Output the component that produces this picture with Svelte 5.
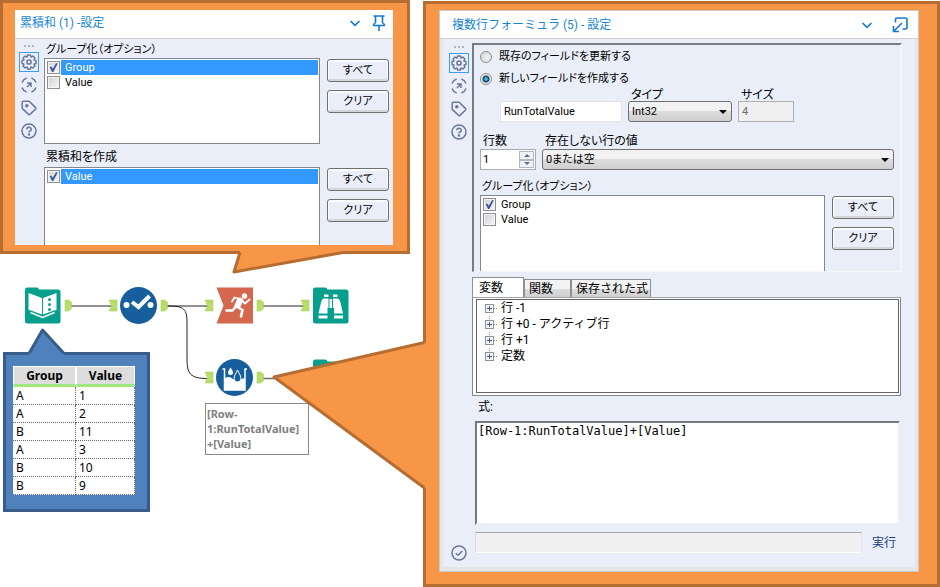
<script>
  let sumGroups = $state([
    { name: 'Group', checked: true, selected: true },
    { name: 'Value', checked: false, selected: false }
  ]);
  let sumFields = $state([{ name: 'Value', checked: true, selected: true }]);
  let rowGroups = $state([
    { name: 'Group', checked: true, selected: false },
    { name: 'Value', checked: false, selected: false }
  ]);
  let mode = $state('new');
  let fieldName = $state('RunTotalValue');
  let rowCount = $state(1);
  let formula = $state('[Row-1:RunTotalValue]+[Value]');
  let activeTab = $state(0);

  const tabs = ['変数', '関数', '保存された式'];
  const tree = ['行 -1', '行 +0 - アクティブ行', '行 +1', '定数'];
  const rows = [['A', 1], ['A', 2], ['B', 11], ['A', 3], ['B', 10], ['B', 9]];

  const setAll = (list, value) => list.forEach((item) => (item.checked = value));

  // Outline of an eight-toothed gear centred on 10,10
  const gear = Array.from({ length: 8 }, (_, i) => {
    const a = (i * Math.PI) / 4;
    return [[5.6, -0.34], [7.1, -0.2], [7.1, 0.2], [5.6, 0.34]]
      .map(([r, d]) => `${(10 + r * Math.cos(a + d)).toFixed(2)},${(10 + r * Math.sin(a + d)).toFixed(2)}`)
      .join(' ');
  }).join(' ');
</script>

{#snippet rail(withStatus)}
  <nav class="rail" aria-label="ツール">
    <span class="grip"><i></i><i></i><i></i></span>
    <button class="tool current" aria-label="設定">
      <svg viewBox="0 0 20 20"><polygon points={gear} /><circle cx="10" cy="10" r="2.1" /></svg>
    </button>
    <button class="tool" aria-label="ナビゲーション">
      <svg viewBox="0 0 20 20">
        <path d="M7.6 3A7.400 7.400 0 0 0 3 7.600M3 12.400A7.400 7.400 0 0 0 7.600 17M12.400 17A7.400 7.400 0 0 0 17 12.400M17 7.600A7.400 7.400 0 0 0 12.400 3" />
        <path d="M8 8H12V12M12 8 8 12" />
      </svg>
    </button>
    <button class="tool" aria-label="注釈">
      <svg viewBox="0 0 20 20">
        <path d="M3.2 4.2Q3.2 3.2 4.2 3.2H10.2L16.6 9.6Q17.2 10.3 16.6 11L11 16.4Q10.3 17 9.6 16.4L3.2 10.4Z" />
        <circle class="solid" cx="7.8" cy="7.8" r="1" />
      </svg>
    </button>
    <button class="tool" aria-label="ヘルプ">
      <svg viewBox="0 0 20 20">
        <circle cx="10" cy="10" r="7" />
        <path d="M7.8 8.3A2.2 2.1 0 1 1 10.8 10.2Q10 10.6 10 11.5" />
        <circle class="solid" cx="10" cy="13.6" r="0.5" />
      </svg>
    </button>
    {#if withStatus}
      <button class="tool last" aria-label="状態">
        <svg viewBox="0 0 20 20"><circle cx="10" cy="10" r="7" /><path d="M6.8 10.2 9 12.3 13.3 7.9" /></svg>
      </button>
    {/if}
  </nav>
{/snippet}

{#snippet picker(items, size)}
  <div class="pick">
    <div class="list {size}">
      {#each items as item}
        <label class="item" class:selected={item.selected}>
          <input type="checkbox" bind:checked={item.checked} /><span>{item.name}</span>
        </label>
      {/each}
    </div>
    <div class="actions">
      <button class="push" onclick={() => setAll(items, true)}>すべて</button>
      <button class="push" onclick={() => setAll(items, false)}>クリア</button>
    </div>
  </div>
{/snippet}

{#snippet anchorIn(x, y)}
  <path class="anchor" d="M{x} {y - 5.5}H{x + 8}V{y + 5.5}H{x}L{x + 2.5} {y}Z" />
{/snippet}
{#snippet anchorOut(x, y)}
  <path class="anchor" d="M{x} {y - 5.5}H{x + 4}L{x + 6.5} {y - 3}V{y + 3}L{x + 4} {y + 5.5}H{x}Z" />
{/snippet}
{#snippet browse(x, y)}
  <g transform="translate({x} {y})">
    <path fill="#069e8c" d="M0 2.5Q0 0 2.5 0H12Q14 0 14.5 2H33Q35.5 2 35.5 4.5V33.5Q35.5 36 33 36H2.5Q0 36 0 33.5Z" />
    <path fill="#fff" d="M11 7H15.5V9.5H11ZM20 7H24.500V9.500H20ZM10.500 11H15.500V20.500H14.500V26H5.500L8 15Q8.500 12 10.500 11ZM25 11H20V20.500H21V26H30L27.500 15Q27 12 25 11ZM16.500 11.500H19V20.500H16.500ZM5.500 28H14.500V31H5.500ZM21 28H30V31H21Z" />
  </g>
{/snippet}

<main class="page">
  <div class="left">
    <section class="callout sum">
      <svg class="tail" viewBox="228 250 122 26" aria-hidden="true">
        <path class="tail-fill" d="M240 250V252.500L234 272 343 252.500V250Z" />
        <path class="tail-line" d="M240 252.500 234 272 343 252.500" />
      </svg>
      <div class="panel">
        <header>
          <h2>累積和 (1) -設定</h2>
          <button class="head" aria-label="メニュー"><svg viewBox="0 0 16 16"><path d="M3.500 6 8 10.300 12.500 6" /></svg></button>
          <button class="head" aria-label="固定">
            <svg viewBox="0 0 16 16"><path d="M2.500 1H13.500M4.500 1V8M11.500 1V8M2.500 10.500Q2.500 8.500 4.500 8M13.500 10.500Q13.500 8.500 11.500 8M2 10.500H14M8 10.500V16" /></svg>
          </button>
        </header>
        <div class="body">
          {@render rail(false)}
          <div class="content">
            <h3 class="option">グループ化（オプション）</h3>
            {@render picker(sumGroups, 'tall')}
            <h3 class="next">累積和を作成</h3>
            {@render picker(sumFields, 'cut')}
          </div>
        </div>
      </div>
    </section>

    <section class="canvas">
      <svg class="flow" viewBox="0 254 410 333" aria-label="ワークフロー">
        <g class="wires">
          <path d="M70 306H112M166 306H208M262 306H304M262 378.500H290" />
          <path class="bend" d="M166 306C182 306 187 307 187 322V358C187 374 190 378.500 208 378.500" />
        </g>
        {@render anchorOut(65, 305.500)}
        {@render anchorIn(109, 305.500)}
        {@render anchorOut(161, 305.500)}
        {@render anchorIn(205, 305.500)}
        {@render anchorOut(257, 305.500)}
        {@render anchorIn(301, 305.500)}
        {@render anchorIn(205, 377.500)}
        {@render anchorOut(257, 377.500)}

        <path fill="#069e8c" d="M25 290Q25 287.500 27.500 287.500H37Q38.500 287.500 39 289.500H58Q60.500 289.500 60.500 292V321Q60.500 323.500 58 323.500H27.500Q25 323.500 25 321Z" />
        <path fill="#fff" d="M28.500 293 42 298V314.500L31 310.500 28.500 310ZM56.500 293 43 298V314.500L54 310.500 56.500 310Z" />
        <path fill="none" stroke="#fff" stroke-width="1.500" d="M30.500 312.500 42.500 317.500 54.500 312.500" />
        <g fill="#069e8c"><circle cx="49.500" cy="299.500" r="1.500" /><circle cx="49.500" cy="304.500" r="1.500" /><circle cx="49.500" cy="309.500" r="1.500" /></g>

        <circle cx="138.500" cy="305.500" r="18.500" fill="#165e9c" />
        <g fill="#fff"><circle cx="126.500" cy="305" r="3" /><circle cx="150.500" cy="305" r="3" /></g>
        <path fill="none" stroke="#fff" stroke-width="4" d="M132 302 138.500 307 149.500 296" />

        <path fill="#d4674e" d="M216.500 287.500H253V323.500H216.500L223.500 305.500Z" />
        <circle cx="244.500" cy="296" r="2.700" fill="#fff" />
        <path fill="#fff" d="M237.500 298Q241.500 296.500 243.500 300L240 308 234 306.500Z" />
        <g fill="none" stroke="#fff" stroke-linecap="round" stroke-linejoin="round">
          <path stroke-width="1.800" d="M239.500 299 234.500 297.500 232 301.500M242 300.500 245 303.500 249.500 299.500" />
          <path stroke-width="2.600" d="M236.500 306.500 242.500 310 241 316.500M236 306.500 232.500 310.500 226.500 310.500" />
        </g>

        {@render browse(313, 287.500)}
        {@render browse(313, 359.500)}

        <circle cx="234.500" cy="377.500" r="18.500" fill="#165e9c" />
        <path fill="none" stroke="#fff" stroke-width="1.500" d="M222.500 369H224.500V390H245V369H247" />
        <path fill="#fff" d="M225 378Q229 376 232 378.500T240 379.500 245 378V390H225Z" />
        <path fill="#fff" d="M230.500 367.500Q233 371 233 372.500A2.500 2.500 0 0 1 228 372.500Q228 371 230.500 367.500Z" />
        <path fill="#165e9c" stroke="#fff" d="M237.500 370Q241 376 241 378.500A3.500 3.500 0 0 1 234 378.500Q234 376 237.500 370Z" />
      </svg>

      <p class="note">[Row-<br />1:RunTotalValue]<br />+[Value]</p>

      <div class="data">
        <svg class="data-tail" viewBox="26 326 42 32" aria-hidden="true">
          <path fill="#4f81bd" d="M29 356V353.500L42.500 330 64 353.500V356Z" />
          <path fill="none" stroke="#385d8a" stroke-width="3" stroke-linejoin="round" d="M29 353.500 42.500 330 64 353.500" />
        </svg>
        <table>
          <thead><tr><th scope="col">Group</th><th scope="col">Value</th></tr></thead>
          <tbody>
            {#each rows as [group, value]}
              <tr><td>{group}</td><td>{value}</td></tr>
            {/each}
          </tbody>
        </table>
      </div>
    </section>
  </div>

  <section class="callout multi">
    <svg class="tail" viewBox="271 340 158 152" aria-hidden="true">
      <path class="tail-fill" d="M428 342.500H424.500L274 377 424.500 488H428Z" />
      <path class="tail-line" d="M424.500 342.500 274 377 424.500 488" />
    </svg>
    <div class="panel framed">
      <header>
        <h2>複数行フォーミュラ (5) - 設定</h2>
        <button class="head" aria-label="メニュー"><svg viewBox="0 0 16 16"><path d="M3.500 6 8 10.300 12.500 6" /></svg></button>
        <button class="head" aria-label="ドッキング">
          <svg viewBox="0 0 16 16"><path d="M3.500 5.500V2.500Q3.500 1 5 1H13.500Q15 1 15 2.500V10.500Q15 12 13.500 12H10.500M10 6 1.500 14.500M1.500 9V14.500H7" /></svg>
        </button>
      </header>
      <div class="body">
        {@render rail(true)}
        <div class="content">
          <div class="inset">
            <label class="choice"><input type="radio" name="mode" value="update" bind:group={mode} />既存のフィールドを更新する</label>
            <label class="choice"><input type="radio" name="mode" value="new" bind:group={mode} />新しいフィールドを作成する</label>
            <div class="fields first">
              <input class="box name" type="text" aria-label="フィールド名" bind:value={fieldName} />
              <div class="field type">
                <label for="type">タイプ</label>
                <div class="drop"><select id="type"><option>Int32</option></select></div>
              </div>
              <div class="field size">
                <label for="size">サイズ</label>
                <input id="size" class="box" type="text" value="4" disabled />
              </div>
            </div>
            <div class="fields second">
              <div class="field count">
                <label for="count">行数</label>
                <div class="spin">
                  <input id="count" type="number" bind:value={rowCount} />
                  <span>
                    <button aria-label="増やす" onclick={() => rowCount++}><i class="up"></i></button>
                    <button aria-label="減らす" onclick={() => rowCount--}><i class="down"></i></button>
                  </span>
                </div>
              </div>
              <div class="field grow">
                <label for="missing">存在しない行の値</label>
                <div class="drop"><select id="missing"><option>0または空</option></select></div>
              </div>
            </div>
            <h3 class="option">グループ化（オプション）</h3>
            {@render picker(rowGroups, 'short')}
          </div>

          <div class="tabs" role="tablist">
            {#each tabs as tab, i}
              <button role="tab" aria-selected={activeTab === i} class:active={activeTab === i} onclick={() => (activeTab = i)}>{tab}</button>
            {/each}
          </div>
          <div class="tabpanel" role="tabpanel">
            <ul class="tree">
              {#each tree as node}
                <li><button aria-label="展開"></button><span>{node}</span></li>
              {/each}
            </ul>
          </div>

          <label class="caption" for="formula">式:</label>
          <textarea id="formula" spellcheck="false" bind:value={formula}></textarea>
          <div class="footer">
            <output></output>
            <a href="#run">実行</a>
          </div>
        </div>
      </div>
    </div>
  </section>
</main>

<style>
  :global(body) { margin: 0; background: #fff; }
  .page, .page * { box-sizing: border-box; }
  .page {
    display: grid;
    grid-template-columns: 410fr 517fr;
    column-gap: 13px;
    color: #000;
    font: 11px/16px Roboto, "Noto Sans CJK JP", sans-serif;
  }
  h2, h3, p, ul { margin: 0; padding: 0; }
  button, input, select, textarea { margin: 0; font: inherit; color: inherit; }
  button { padding: 0; border: 0; background: none; }
  svg { display: block; }
  .left { display: flex; flex-direction: column; min-width: 0; }

  .callout { position: relative; z-index: 2; border: 3px solid #b66d31; background: #f79646; }
  .sum { padding: 7px 14px 6px 12px; }
  .multi { z-index: 1; margin-top: 1px; padding: 6px 18px 12px 13px; }
  .tail { position: absolute; }
  .sum .tail { left: 225px; top: 247px; width: 122px; height: 26px; }
  .multi .tail { left: -155px; top: 336px; width: 158px; height: 152px; }
  .tail-fill { fill: #f79646; }
  .tail-line { fill: none; stroke: #b66d31; stroke-width: 3; stroke-linejoin: round; }

  .panel { position: relative; background: #eaeef9; }
  header {
    display: flex;
    align-items: center;
    height: 29px;
    padding: 0 6px 3px 5px;
    gap: 8px;
    background: #fff;
    border-bottom: 1px solid #cfcfcf;
  }
  h2 { flex: 1; font-size: 12px; font-weight: 400; color: #1b86d0; }
  h3, .field label, .choice, .push, .caption { font-size: 12px; font-weight: 400; font-feature-settings: "palt"; }
  .option, .choice, .push { font-size: 11px; }
  .head { width: 16px; height: 16px; }
  .head svg { width: 16px; height: 16px; fill: none; stroke: #1479d4; stroke-width: 1.600; }
  .framed { border: 1px solid #c8c8c8; }
  .framed header { height: 28px; padding: 0 10px 0 12px; gap: 17px; }
  .body { display: flex; }
  .framed .body { border: solid #e4e5e8; border-width: 0 3px 4px; }

  .rail { display: flex; flex-direction: column; align-items: center; gap: 3px; width: 29px; padding-right: 2px; }
  .framed .rail { padding: 1px 0 4px 3px; }
  .grip { display: flex; gap: 2px; height: 10px; padding-top: 6px; }
  .grip i { width: 2px; height: 2px; background: #b4b4b4; }
  .tool { width: 20px; height: 20px; }
  .tool.current { outline: 1px solid #3c9bf5; outline-offset: -1px; }
  .tool.last { margin-top: auto; }
  .tool svg { width: 20px; height: 20px; fill: none; stroke: #69779a; stroke-width: 1.500; stroke-linejoin: round; }
  .tool .solid { fill: #69779a; }

  .content { flex: 1; min-width: 0; }
  .sum .content { padding: 3px 4px 0 0; }
  .framed .content { padding: 4px 13px 14px 0; }
  h3 { padding-left: 2px; }
  .next { padding: 5px 2px 2px; }
  .pick { display: flex; gap: 7px; }
  .list { flex: 1; padding: 1px 1px 1px 2px; border: 1px solid #828790; background: #fff; }
  .tall { min-height: 86px; }
  .cut { min-height: 78px; border-bottom: 0; }
  .short { min-height: 76px; border-bottom: 0; }
  .item { display: flex; align-items: center; height: 15px; }
  .item span { flex: 1; margin-left: 1px; padding-left: 4px; line-height: 15px; }
  .selected span { background: #3399ff; color: #fff; }
  .item input {
    position: relative;
    appearance: none;
    width: 13px;
    height: 13px;
    border: 1px solid #8e8f8f;
    background: linear-gradient(135deg, #cfd2d6, #f6f6f6);
    box-shadow: inset 0 0 0 1px #f4f4f4;
  }
  .item input:checked::after {
    content: "";
    position: absolute;
    inset: 1px;
    background: #3d5798;
    clip-path: polygon(8% 45%, 28% 42%, 42% 65%, 78% 2%, 98% 2%, 48% 100%, 34% 100%);
  }
  .actions { display: flex; flex-direction: column; gap: 8px; padding-top: 1px; }
  .push {
    width: 62px;
    height: 23px;
    border: 1px solid #707070;
    border-radius: 3px;
    background: #eaeef9;
    box-shadow: inset 0 1px 0 1px #fbfcfd, inset -1px -2px 0 #d3d5d8;
  }

  .inset { padding: 1px 6px 0; border: solid; border-width: 2px 2px 1px; border-color: #777b82 #f6f7f9 #f6f7f9 #777b82; }
  .choice { display: flex; align-items: center; height: 22px; gap: 7px; }
  .choice input {
    appearance: none;
    width: 12px;
    height: 12px;
    border: 1px solid #8e8f8f;
    border-radius: 50%;
    background: radial-gradient(circle at 60% 60%, #f4f4f4, #cccfd3);
  }
  .choice input:checked { background: radial-gradient(circle, #4bb4de 0 1px, #153c63 3px, #e8e8e8 4px); }
  .fields { display: flex; align-items: flex-end; gap: 6px; }
  .field { display: flex; flex-direction: column; }
  .field label { padding-left: 3px; }
  .first { padding-left: 20px; }
  .first label { line-height: 11px; }
  .second { padding-top: 11px; }
  .name { width: 122px; }
  .type { width: 104px; }
  .size { width: 56px; }
  .count { width: 56px; }
  .grow { flex: 1; }
  .box { width: 122px; height: 21px; padding: 0 3px; border: 1px solid #e2e3ea; background: #fff; }
  .size .box { width: 56px; border: 1px solid #afafaf; background: #f0f0f0; color: #6d6d6d; }
  .drop { position: relative; }
  .drop::after {
    content: "";
    position: absolute;
    right: 5px;
    top: 9px;
    border: 4px solid transparent;
    border-top-color: #000;
    border-bottom: 0;
    pointer-events: none;
  }
  select {
    appearance: none;
    display: block;
    width: 100%;
    height: 21px;
    padding: 0 16px 0 3px;
    border: 1px solid #707070;
    border-radius: 3px;
    background: linear-gradient(#f2f2f2 0 50%, #dddddd 50%, #cfcfcf);
  }
  #missing { font-feature-settings: "palt"; }
  .spin { display: flex; height: 21px; padding: 1px; border: 1px solid #abadb3; background: #fff; }
  .spin input { appearance: textfield; flex: 1; min-width: 0; padding: 0 1px; border: 0; outline: 0; background: none; }
  .spin input::-webkit-inner-spin-button { display: none; }
  .spin span { display: flex; flex-direction: column; width: 15px; }
  .spin button { flex: 1; display: grid; place-items: center; border: 1px solid #b4b8c0; background: #f1f2f4; }
  .spin i { border: 3px solid transparent; }
  .spin .up { border-top-width: 0; border-bottom-color: #5c6f9e; }
  .spin .down { border-bottom-width: 0; border-top-color: #5c6f9e; }
  .inset h3 { padding-top: 9px; }

  .tabs { display: flex; align-items: flex-end; height: 20px; margin-top: 5px; font-size: 12px; }
  .tabs button {
    min-width: 47px;
    height: 18px;
    padding: 0 2px 0 4px;
    border: 1px solid #8b8f96;
    border-bottom: 0;
    background: linear-gradient(#f3f3f3 0 50%, #dddddd 50%, #d0d0d0);
    line-height: 16px;
    text-align: left;
  }
  .tabs button.active { min-width: 52px; height: 20px; padding-left: 6px; background: #fff; }
  .tabpanel { margin-right: 1px; padding: 1px 1px 2px 3px; border: 1px solid #828790; border-top-color: #a0a3a8; background: #fff; }
  .tree { min-height: 94px; border: 1px solid #646464; list-style: none; font-size: 12px; }
  .tree li { display: flex; align-items: center; height: 16px; padding-left: 8px; }
  .tree button {
    width: 9px;
    height: 9px;
    border: 1px solid #919191;
    background:
      linear-gradient(#3b5797, #3b5797) center / 5px 1px no-repeat,
      linear-gradient(#3b5797, #3b5797) center / 1px 5px no-repeat,
      #f6f6f6;
  }
  .tree li + li { background: repeating-linear-gradient(#888 0 1px, transparent 1px 2px) 12px 0 / 1px 4px no-repeat; }
  .tree span { display: flex; align-items: center; gap: 4px; }
  .tree span::before { content: ""; width: 3px; border-top: 1px dotted #888; }

  .caption { display: block; padding: 3px 0 6px 6px; }
  textarea {
    display: block;
    width: calc(100% - 5px);
    height: 104px;
    margin: 0 2px 0 3px;
    padding: 0 1px;
    border: 2px solid;
    border-color: #74777c #eceef2 #eceef2 #74777c;
    outline: 0;
    background: #fff;
    font: 12px/16px "DejaVu Sans Mono", "Noto Sans CJK JP", monospace;
    resize: none;
  }
  .footer { display: flex; align-items: center; gap: 10px; padding: 7px 6px 0 3px; }
  output { flex: 1; height: 21px; border: 1px solid; border-color: #a6a8ac #e2e4e8 #fff #dcdee2; background: #f0f0f0; }
  .footer a { color: #1d3c7c; font-size: 12px; text-decoration: none; }

  .canvas { position: relative; flex: 1; min-height: 333px; }
  .flow { width: 410px; height: 333px; }
  .wires { fill: none; stroke: #6e6e6e; stroke-width: 1.500; }
  .bend { stroke: #222; stroke-width: 1; }
  .anchor { fill: #b9dd6b; stroke: #a3c95a; stroke-width: 0.500; }
  .note {
    position: absolute;
    left: 205px;
    top: 149px;
    padding: 2px 1px;
    width: 104px;
    height: 52px;
    border: 1px solid #8a8a8a;
    background: #fff;
    color: #808080;
    font: bold 11px/15px "Noto Sans", sans-serif;
  }
  .data { position: absolute; left: 3px; top: 98px; padding: 11px 12px 14px 7px; border: 3px solid #385d8a; background: #4f81bd; }
  .data-tail { position: absolute; left: 20px; top: -29px; width: 42px; height: 32px; }
  table { width: 122px; border-collapse: separate; border-spacing: 0; background: #fff; font: 12px/17px "Noto Sans", sans-serif; }
  th { height: 21px; padding: 1px 0 0; border: 1px solid #fff; border-bottom: 3px solid #9fe87f; background: #ddd; line-height: 16px; }
  td { height: 18px; padding: 1px 3px 0; border: dotted #666; border-width: 0 1px 1px 0; line-height: 16px; }
  th:first-child { width: 63px; }
</style>
